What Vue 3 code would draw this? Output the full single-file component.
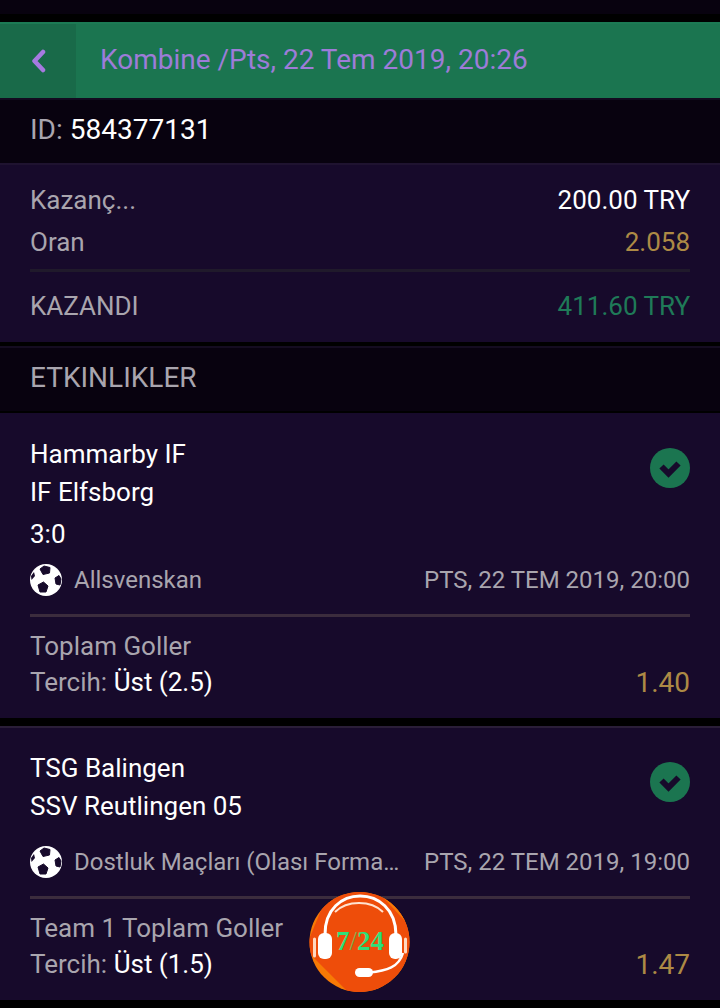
<template>
  <div class="screen">
    <div class="status" />
    <header class="topbar">
      <button class="back" aria-label="Geri">
        <svg width="18" height="24" viewBox="0 0 18 24">
          <path d="M14 3 5.500 12 14 21" fill="none" stroke="currentColor" stroke-width="4.500" stroke-linejoin="round" stroke-linecap="round" />
        </svg>
      </button>
      <h1 class="title">Kombine /Pts, 22 Tem 2019, 20:26</h1>
    </header>

    <div class="band id-band"><span class="muted">ID:</span> <span class="white">584377131</span></div>

    <section class="summary">
      <div class="sum-row"><span class="muted">Kazanç...</span><span class="white">200.00 TRY</span></div>
      <div class="sum-row"><span class="muted">Oran</span><span class="gold">2.058</span></div>
      <div class="sum-rule" />
      <div class="sum-row result"><span class="muted">KAZANDI</span><span class="green">411.60 TRY</span></div>
    </section>

    <div class="band events-band"><span class="muted">ETKINLIKLER</span></div>

    <article v-for="ev in events" :key="ev.id" class="event">
      <div class="teams">
        <div class="team-lines">
          <div v-for="t in ev.teams" :key="t" class="team">{{ t }}</div>
          <div v-if="ev.score" class="score">{{ ev.score }}</div>
        </div>
        <svg class="check" width="40" height="40" viewBox="0 0 40 40">
          <circle cx="20" cy="20" r="20" fill="#1b7550" />
          <path d="M11.500 18.500 18.500 25.500 28.500 15.500" fill="none" stroke="#170a2b" stroke-width="6" />
        </svg>
      </div>
      <div class="meta">
        <svg class="ball" width="32" height="32" viewBox="0 0 32 32">
          <circle cx="16" cy="16" r="16" fill="#fff" />
          <path d="M10 5 14 2 20 3.500 19.500 9 13 10.500z" fill="#170a2b" stroke="#170a2b" stroke-linejoin="round" />
          <path d="M25 14 29 11.500 31 15 30 21 26 20z" fill="#170a2b" stroke="#170a2b" stroke-linejoin="round" />
          <path d="M8 21 13.500 18 18 22 16 28 10 28z" fill="#170a2b" stroke="#170a2b" stroke-linejoin="round" />
          <path d="M1 12 4 8 5 12 1.500 16z" fill="#170a2b" />
        </svg>
        <span class="league muted">{{ ev.league }}</span>
        <span class="date muted">{{ ev.date }}</span>
      </div>
      <div class="rule" />
      <div class="market muted">{{ ev.market }}</div>
      <div class="pick">
        <span><span class="muted">Tercih:</span> <span class="white">{{ ev.pick }}</span></span>
        <span class="gold odds">{{ ev.odds }}</span>
      </div>
    </article>

    <div class="support" aria-label="7/24">
      <svg width="102" height="102" viewBox="0 0 102 102">
        <defs>
          <clipPath id="disc"><circle cx="50.500" cy="51" r="50" /></clipPath>
        </defs>
        <circle cx="50.500" cy="51" r="50" fill="#f77a05" />
        <g clip-path="url(#disc)">
          <path d="M-4 58 46 108 110 108 110 26 76 0 20 0z" fill="#ee4d0a" />
          <path d="M70 2 96 30 102 28 78 0z" fill="#f77a05" />
        </g>
        <path d="M16 44C15 -8 87 -8 87 44" fill="none" stroke="#fff" stroke-width="3" />
        <path d="M26 21C38 9 62 9 74 21" fill="none" stroke="#ffe3d0" stroke-width="2" />
        <rect x="9" y="42" width="14" height="26" rx="6" fill="#fff" />
        <rect x="80" y="42" width="13" height="26" rx="6" fill="#fff" />
        <path d="M5.500 48v17M96.500 48v13" stroke="#ffd9c0" stroke-width="3" stroke-linecap="round" />
        <path d="M94 62C90 76 78 80 60 81.500" fill="none" stroke="#fff" stroke-width="2.500" />
        <rect x="46" y="77" width="18" height="9" rx="4.500" fill="#fff" />
        <text x="51" y="59" text-anchor="middle" class="support-text">7<tspan class="support-slash">/</tspan>24</text>
      </svg>
    </div>
  </div>
</template>

<script setup>
const events = [
  {
    id: 1,
    teams: ['Hammarby IF', 'IF Elfsborg'],
    score: '3:0',
    league: 'Allsvenskan',
    date: 'PTS, 22 TEM 2019, 20:00',
    market: 'Toplam Goller',
    pick: 'Üst (2.5)',
    odds: '1.40',
  },
  {
    id: 2,
    teams: ['TSG Balingen', 'SSV Reutlingen 05'],
    score: '',
    league: 'Dostluk Maçları (Olası Forma…',
    date: 'PTS, 22 TEM 2019, 19:00',
    market: 'Team 1 Toplam Goller',
    pick: 'Üst (1.5)',
    odds: '1.47',
  },
]
</script>

<style>
html,
body {
  margin: 0;
  background: #000;
}
</style>

<style scoped>
.screen {
  position: relative;
  width: 720px;
  height: 1008px;
  overflow: hidden;
  background: #000;
  font-family: Roboto, "Liberation Sans", sans-serif;
  font-size: 26px;
  color: #fff;
}

.status {
  height: 14px;
  margin-bottom: 8px;
  background: #08020f;
}

.topbar {
  display: flex;
  align-items: center;
  box-sizing: border-box;
  height: 76px;
  border-top: 2px solid #1c7a54;
  background: #1b7550;
}

.back {
  display: flex;
  align-items: center;
  justify-content: center;
  width: 76px;
  height: 100%;
  padding: 0;
  border: 0;
  background: #196a49;
  color: #a67ae0;
}

.title {
  margin: 0 0 3px 24px;
  font-size: 28px;
  font-weight: 400;
  color: #9d7cd8;
}

.band {
  display: flex;
  align-items: center;
  gap: 7px;
  box-sizing: border-box;
  height: 67px;
  padding: 0 30px 5px;
  background: #08020f;
  font-size: 28px;
}

.id-band {
  border-top: 2px solid #130a20;
  border-bottom: 2px solid #1f1330;
}

.events-band {
  border-top: 2px solid #140c20;
  border-bottom: 2px solid #000;
}

.summary {
  box-sizing: border-box;
  height: 177px;
  margin-bottom: 4px;
  padding: 14px 30px 0;
  background: #170a2b;
}

.sum-row {
  display: flex;
  justify-content: space-between;
  align-items: center;
  height: 42px;
}

.sum-rule {
  height: 3px;
  margin: 6px 0 14px;
  background: #201a2b;
}

.result {
  height: 40px;
}

.event {
  box-sizing: border-box;
  padding: 22px 30px 0;
  background: #170a2b;
}

.event:first-of-type {
  height: 305px;
  margin-bottom: 8px;
}

.event + .event {
  height: 274px;
  padding-top: 21px;
  border-top: 2px solid #2a1e38;
}

.teams {
  display: flex;
  justify-content: space-between;
  align-items: flex-start;
}

.team {
  height: 38px;
  line-height: 38px;
}

.score {
  height: 46px;
  line-height: 46px;
}

.check {
  margin-top: 13px;
}

.meta {
  display: flex;
  align-items: center;
  height: 40px;
  margin-top: 3px;
  font-size: 24px;
}

.event + .event .meta {
  margin-top: 17px;
}

.ball {
  flex: none;
  margin-right: 12px;
}

.league {
  flex: 1;
  white-space: nowrap;
}

.rule {
  height: 3px;
  margin-top: 14px;
  background: #3b2c3d;
}

.market {
  height: 36px;
  margin-top: 11px;
  line-height: 36px;
}

.pick {
  display: flex;
  justify-content: space-between;
  align-items: center;
  height: 36px;
}

.odds {
  font-size: 28px;
}

.muted {
  color: #a9a5ae;
}

.white {
  color: #fff;
}

.gold {
  color: #ad8a45;
}

.green {
  color: #1f7a58;
}

.support {
  position: absolute;
  left: 309px;
  top: 891px;
  width: 102px;
  height: 102px;
}

.support-text {
  font-family: "Liberation Serif", serif;
  font-size: 27px;
  font-weight: 700;
  fill: #2ee07a;
}

.support-slash {
  fill: #7fae4a;
  font-weight: 400;
}
</style>
